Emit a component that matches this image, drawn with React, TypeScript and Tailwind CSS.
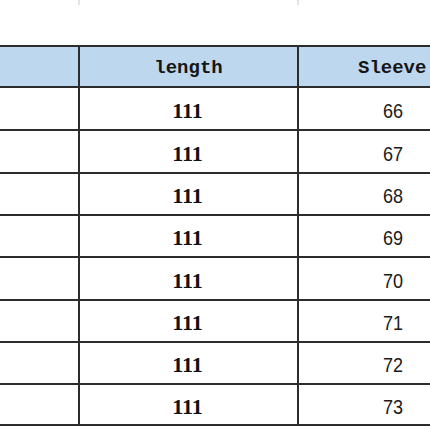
import React from "react";

const rows = [
  { sleeve: "66", h: "h-[41px]" },
  { sleeve: "67", h: "h-[41px]" },
  { sleeve: "68", h: "h-[40px]" },
  { sleeve: "69", h: "h-[40px]" },
  { sleeve: "70", h: "h-[41px]" },
  { sleeve: "71", h: "h-[40px]" },
  { sleeve: "72", h: "h-[40px]" },
  { sleeve: "73", h: "h-[39px]" },
];

export default function App() {
  return (
    <div className="h-[430px] w-[430px] overflow-hidden bg-white">
      <div className="flex h-[45px] gap-0">
        <div className="ml-[78px] h-[5px] w-[2px] bg-[#e4e4e4]" />
        <div className="ml-[217px] h-[5px] w-[2px] bg-[#e4e4e4]" />
      </div>
      <div className="grid w-[540px] grid-cols-[78px_217px_241px] gap-[2px] border-y-2 border-[#2c2c2c] bg-[#2c2c2c]">
        <div className="h-[39px] bg-[#bdd7ee]" />
        <div className="flex h-[39px] items-center justify-center bg-[#bdd7ee] pt-[4px] font-['Liberation_Mono',monospace] text-[19px] font-bold text-[#151515]">
          length
        </div>
        <div className="flex h-[39px] items-center bg-[#bdd7ee] pl-[59px] pt-[4px] font-['Liberation_Mono',monospace] text-[19px] font-bold text-[#151515]">
          Sleeve
        </div>
        {rows.map((r) => (
          <React.Fragment key={r.sleeve}>
            <div className={`${r.h} bg-white`} />
            <div className={`${r.h} flex items-center justify-center bg-white pt-[3px] pr-[2px] font-['Liberation_Serif',serif] text-[22px] font-bold text-[#111]`}>
              111
            </div>
            <div className={`${r.h} flex items-center bg-white pl-[83px] pt-[4px]`}>
              <span className="inline-block w-[22px] scale-x-[0.9] text-center font-['Liberation_Sans',sans-serif] text-[20px] leading-none text-[#1a1a1a]">
                {r.sleeve}
              </span>
            </div>
          </React.Fragment>
        ))}
      </div>
    </div>
  );
}
